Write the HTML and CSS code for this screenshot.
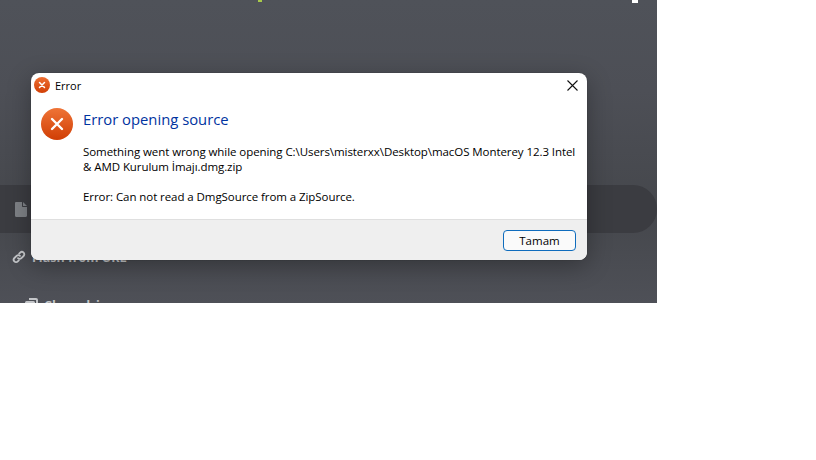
FILE: index.html
```html
<!DOCTYPE html>
<html lang="en">
<head>
    <meta charset="UTF-8">
    <meta name="viewport" content="width=device-width, initial-scale=1.0">
    <title>Error</title>
    <link rel="stylesheet" href="styles.css">
</head>
<body>
    <div class="app">
        <div class="top-specks">
            <span class="speck-green"></span>
            <span class="speck-white"></span>
        </div>

        <!-- Flash source list behind the dialog -->
        <div class="source-list">
            <div class="source-row selected">
                <svg class="row-icon" width="12" height="15" viewBox="0 0 12 15"><path d="M0 1.2C0 .5.5 0 1.2 0H7v4c0 .6.4 1 1 1h4v8.800c0 .7-.5 1.200-1.200 1.200H1.200C.5 15 0 14.500 0 13.800zM8 0l4 4H8z" fill="#7d8085"/></svg>
            </div>
            <div class="source-row url">
                <svg class="row-icon" width="14" height="14" viewBox="0 0 14 14" fill="none" stroke="#c4c6c9" stroke-width="1.800" stroke-linecap="round"><path d="M6 8.200a2.400 2.400 0 0 0 3.400 0l2.200-2.200a2.400 2.400 0 0 0-3.400-3.400L7.200 3.600"/><path d="M8 5.800a2.400 2.400 0 0 0-3.400 0L2.400 8a2.400 2.400 0 0 0 3.400 3.400l1-1"/></svg>
                <span class="row-label">Flash from URL</span>
            </div>
            <div class="source-row clone">
                <svg class="row-icon" width="13" height="14" viewBox="0 0 13 14"><path d="M4 0h7a2 2 0 0 1 2 2v7h-2V2H4z" fill="#c4c6c9"/><rect x="0" y="3" width="10" height="11" rx="1.500" fill="#c4c6c9"/></svg>
                <span class="row-label">Clone drive</span>
            </div>
        </div>

        <!-- Error dialog -->
        <div class="dialog">
            <div class="title-bar">
                <svg class="title-icon" width="16" height="16" viewBox="0 0 16 16">
                    <circle cx="8" cy="8" r="8" fill="url(#errSmall)"/>
                    <path d="M5.500 5.500l5 5M10.500 5.500l-5 5" stroke="#fff" stroke-width="1.500" stroke-linecap="round"/>
                    <defs><linearGradient id="errSmall" x1="0" y1="0" x2="0" y2="1"><stop offset="0" stop-color="#ee6f32"/><stop offset="1" stop-color="#d13f06"/></linearGradient></defs>
                </svg>
                <span class="title-text">Error</span>
                <svg class="close-icon" width="11" height="11" viewBox="0 0 11 11"><path d="M.5.500l10 10M10.500.500l-10 10" stroke="#111" stroke-width="1.100"/></svg>
            </div>
            <div class="dialog-body">
                <svg class="big-icon" width="32" height="32" viewBox="0 0 32 32">
                    <circle cx="16" cy="16" r="16" fill="url(#errBig)"/>
                    <path d="M11 11l10 10M21 11L11 21" stroke="#fff" stroke-width="2.400" stroke-linecap="round"/>
                    <defs><linearGradient id="errBig" x1="0" y1="0" x2="0" y2="1"><stop offset="0" stop-color="#ef7437"/><stop offset="1" stop-color="#d03e05"/></linearGradient></defs>
                </svg>
                <div class="dialog-text">
                    <h2 class="heading">Error opening source</h2>
                    <p class="message">Something went wrong while opening C:\Users\misterxx\Desktop\macOS Monterey 12.3 Intel &amp; AMD Kurulum İmajı.dmg.zip</p>
                    <p class="message">Error: Can not read a DmgSource from a ZipSource.</p>
                </div>
            </div>
            <div class="dialog-footer">
                <button class="ok-button">Tamam</button>
            </div>
        </div>
    </div>
</body>
</html>
```

FILE: styles.css
```css
body {
    margin: 0;
    background: #fff;
    font-family: "Open Sans", "Noto Sans", sans-serif;
}
.app {
    position: relative;
    width: 657px;
    height: 303px;
    overflow: hidden;
    background: linear-gradient(180deg, #4f5259 0%, #4d4f56 30%, #45474c 70%, #4e5057 100%);
}
.top-specks {
    display: flex;
    justify-content: space-between;
    height: 3px;
    padding: 0 19px 0 258px;
}
.speck-green {
    width: 4px;
    height: 2px;
    background: #a8c94a;
}
.speck-white {
    width: 6px;
    height: 3px;
    background: #fff;
}
.source-list {
    margin-top: 182px;
    display: flex;
    flex-direction: column;
}
.source-row {
    display: flex;
    align-items: center;
    gap: 6px;
    height: 48px;
    color: #c4c6c9;
    font-size: 12.500px;
    font-weight: 700;
}
.source-row.selected {
    padding-left: 15px;
    border-radius: 0 24px 24px 0;
    background: #3b3c41;
}
.source-row.url {
    padding-left: 12px;
}
.source-row.clone {
    padding-left: 25px;
}
.dialog {
    position: absolute;
    left: 31px;
    top: 73px;
    width: 556px;
    height: 187px;
    display: flex;
    flex-direction: column;
    border-radius: 8px;
    overflow: hidden;
    background: #fff;
    box-shadow: 0 6px 24px rgba(0, 0, 0, 0.3), 0 0 1px rgba(0, 0, 0, 0.5);
}
.title-bar {
    display: flex;
    align-items: center;
    height: 24px;
    padding: 0 9px 0 3px;
}
.title-text {
    flex: 1;
    margin-left: 5px;
    font-size: 11px;
    color: #000;
}
.dialog-body {
    flex: 1;
    display: flex;
    padding: 11px 8px 0 10px;
}
.big-icon {
    flex-shrink: 0;
}
.dialog-text {
    margin-left: 10px;
    margin-top: -1px;
}
.heading {
    margin: 0;
    font-size: 14.800px;
    font-weight: 400;
    line-height: 24px;
    color: #0033a0;
}
.message {
    margin: 13px 0 0;
    font-size: 11.500px;
    line-height: 15px;
    letter-spacing: -0.070px;
    color: #000;
}
.message + .message {
    margin-top: 15px;
}
.dialog-footer {
    display: flex;
    justify-content: flex-end;
    align-items: center;
    height: 40px;
    padding-right: 11px;
    border-top: 1px solid #dfdfdf;
    background: #efefef;
}
.ok-button {
    width: 73px;
    height: 21px;
    padding: 0;
    border: 1px solid #0f6cbd;
    border-radius: 4px;
    background: #fafafa;
    font-family: inherit;
    font-size: 11.500px;
    color: #000;
}
```
